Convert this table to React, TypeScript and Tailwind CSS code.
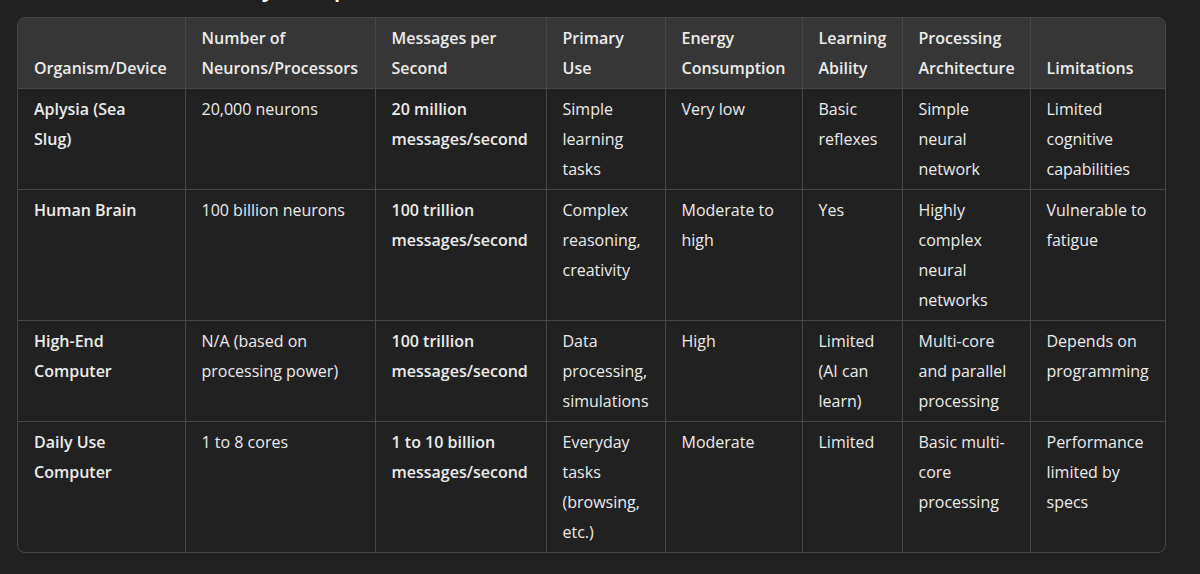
import React from 'react';

interface Row {
  name: string;
  neurons: string;
  messages: string;
  use: string;
  energy: string;
  learning: string;
  arch: string;
  limits: string;
}

const columns = [
  { label: 'Organism/Device', width: 'w-[167px]' },
  { label: 'Number of Neurons/Processors', width: 'w-[190px]' },
  { label: 'Messages per Second', width: 'w-[171px]' },
  { label: 'Primary Use', width: 'w-[119px]' },
  { label: 'Energy Consumption', width: 'w-[137px]' },
  { label: 'Learning Ability', width: 'w-[100px]' },
  { label: 'Processing Architecture', width: 'w-[128px]' },
  { label: 'Limitations', width: 'w-[137px]' },
];

const rows: Row[] = [
  {
    name: 'Aplysia (Sea Slug)',
    neurons: '20,000 neurons',
    messages: '20 million messages/second',
    use: 'Simple learning tasks',
    energy: 'Very low',
    learning: 'Basic reflexes',
    arch: 'Simple neural network',
    limits: 'Limited cognitive capabilities',
  },
  {
    name: 'Human Brain',
    neurons: '100 billion neurons',
    messages: '100 trillion messages/second',
    use: 'Complex reasoning, creativity',
    energy: 'Moderate to high',
    learning: 'Yes',
    arch: 'Highly complex neural networks',
    limits: 'Vulnerable to fatigue',
  },
  {
    name: 'High-End Computer',
    neurons: 'N/A (based on processing power)',
    messages: '100 trillion messages/second',
    use: 'Data processing, simulations',
    energy: 'High',
    learning: 'Limited (AI can learn)',
    arch: 'Multi-core and parallel processing',
    limits: 'Depends on programming',
  },
  {
    name: 'Daily Use Computer',
    neurons: '1 to 8 cores',
    messages: '1 to 10 billion messages/second',
    use: 'Everyday tasks (browsing, etc.)',
    energy: 'Moderate',
    learning: 'Limited',
    arch: 'Basic multi-core processing',
    limits: 'Performance limited by specs',
  },
];

const cell = 'px-4 py-[5px] align-top border-t border-[#474747]';

export default function App() {
  return (
    <div
      className="h-[574px] w-full overflow-hidden bg-[#212121] px-[17px] text-[16px] leading-[30px] text-[#ececec]"
      style={{ fontFamily: '"Open Sans", "Noto Sans", sans-serif' }}
    >
      {/* heading scrolled mostly out of view */}
      <h3 className="-mt-[29px] text-[24px] leading-[32px] font-semibold text-white">
        4. Enhanced Summary Comparison
      </h3>

      <div className="mt-[14px] w-[1149px] overflow-hidden rounded-lg border border-[#474747]">
        <table className="w-full table-fixed border-collapse text-left">
          <colgroup>
            {columns.map((c) => (
              <col key={c.label} className={c.width} />
            ))}
          </colgroup>
          <thead className="bg-[#363636]">
            <tr>
              {columns.map((c, i) => (
                <th
                  key={c.label}
                  className={`px-4 py-[5px] align-bottom font-semibold ${i > 0 ? 'border-l border-[#474747]' : ''}`}
                >
                  {c.label}
                </th>
              ))}
            </tr>
          </thead>
          <tbody>
            {rows.map((r) => (
              <tr key={r.name}>
                <td className={`${cell} pr-6 font-semibold`}>{r.name}</td>
                <td className={`${cell} border-l`}>{r.neurons}</td>
                <td className={`${cell} border-l font-semibold`}>{r.messages}</td>
                <td className={`${cell} border-l`}>{r.use}</td>
                <td className={`${cell} border-l`}>{r.energy}</td>
                <td className={`${cell} border-l`}>{r.learning}</td>
                <td className={`${cell} border-l`}>{r.arch}</td>
                <td className={`${cell} border-l`}>{r.limits}</td>
              </tr>
            ))}
          </tbody>
        </table>
      </div>
    </div>
  );
}
